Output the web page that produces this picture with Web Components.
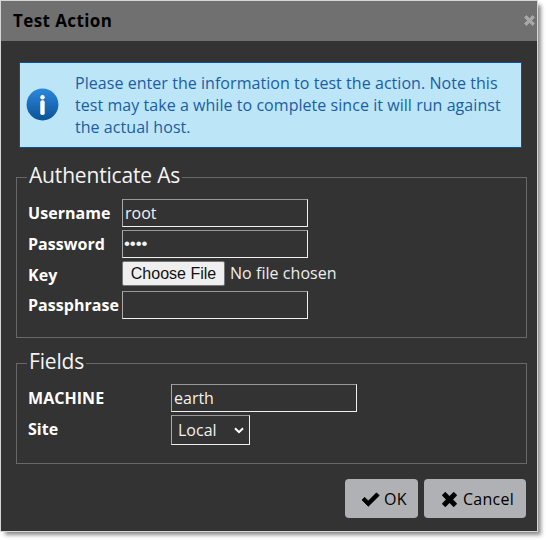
<!DOCTYPE html>
<html lang="en"><head><meta charset="utf-8"><title>Test Action</title>
<style>
html,body{margin:0;background:#fff}
body{width:546px;height:540px;overflow:hidden;font:16px/22px "Open Sans","Noto Sans",sans-serif}
</style></head><body>
<test-dialog heading="Test Action">
<info-note>Please enter the information to test the action. Note this test may take a while to complete since it will run against the actual host.</info-note>
<field-group legend="Authenticate As" class="auth">
<form-row label="Username" style="height:31px"><text-field value="root"></text-field></form-row>
<form-row label="Password" style="height:31px"><text-field value="••••" secret></text-field></form-row>
<form-row label="Key" style="height:30px"><file-field></file-field></form-row>
<form-row label="Passphrase" style="height:28px"><text-field value=""></text-field></form-row>
</field-group>
<field-group legend="Fields" class="extra">
<form-row label="MACHINE" style="height:31px"><text-field value="earth"></text-field></form-row>
<form-row label="Site" style="height:30px"><select-field value="Local"></select-field></form-row>
</field-group>
<action-button slot="actions" icon="check" style="width:73px;--pad:16px;--gap:4px">OK</action-button>
<action-button slot="actions" icon="cross" style="width:102px;--pad:18px;--gap:6px">Cancel</action-button>
</test-dialog>
<script>
const define=(name,render)=>customElements.define(name,class extends HTMLElement{
  connectedCallback(){
    if(this.shadowRoot)return;
    const t=document.createElement('template');
    t.innerHTML=render(this);
    this.attachShadow({mode:'open'}).append(t.content.cloneNode(true));
  }
});
const cross='<path d="M3.5 .8 8 5.2 12.5 .8 15.2 3.5 10.8 8 15.2 12.5 12.5 15.2 8 10.8 3.5 15.2 .8 12.5 5.2 8 .8 3.5Z" fill="currentColor" stroke="currentColor" stroke-width="1.4" stroke-linejoin="round"/>';
define('test-dialog',e=>`<style>
:host{display:flex;flex-direction:column;box-sizing:border-box;width:538px;height:532px;border:1px solid #d4d6d5;background:#333;box-shadow:4px 4px 4px -1px rgba(0,0,0,.45)}
header{height:40px;flex:none;box-sizing:border-box;background:#707070;color:#000;display:flex;align-items:center;justify-content:space-between;padding:0 2px 1px 12px;font-size:17px;font-weight:700;letter-spacing:.4px}
header svg{width:11px;height:11px;color:#a8a8a8}
main{padding:21px 10px 0 15px}
footer{display:flex;justify-content:flex-end;gap:6px;padding:15px 11px 0}
</style><header><span>${e.getAttribute('heading')}</span><svg viewBox="0 0 16 16">${cross}</svg></header><main><slot></slot></main><footer><slot name="actions"></slot></footer>`);
define('info-note',()=>`<style>
:host{display:flex;align-items:center;box-sizing:border-box;width:503px;height:86px;margin-left:3px;border:1px solid #0a52a0;background:#bce5f7;color:#1a5da6;padding:0 12px 0 6px;gap:16px;letter-spacing:.05px}
svg{width:33px;height:33px;flex:none;margin-top:-2px}p{margin:0 -8px 0 0;width:440px}
</style><svg viewBox="0 0 33 33"><defs><linearGradient id="g" x1="0" y1="0" x2="0" y2="1"><stop offset="0" stop-color="#2d87dc"/><stop offset="1" stop-color="#0a5397"/></linearGradient></defs><circle cx="16.5" cy="16.5" r="15.9" fill="url(#g)"/><circle cx="16.5" cy="9.2" r="2.2" fill="#fff"/><rect x="14.3" y="12.3" width="4.4" height="14.8" rx="1.8" fill="#fff"/></svg><p><slot></slot></p>`);
define('field-group',e=>`<style>
:host{display:block;width:511px}
:host(.auth){margin-top:17px;--label:94px;--top:9px;--h:138px}:host(.extra){margin-top:13px;--label:143px;--top:8px;--h:79px}
fieldset{box-sizing:border-box;margin:0;border:1px solid #686868;padding:var(--top) 0 0 11px;min-width:0}
legend{font-size:21px;line-height:25px;height:25px;padding:0 2px;color:#f4f4f4;margin-left:-1px;letter-spacing:-.17px}
legend span{position:relative;top:-2px}
div{height:var(--h)}
</style><fieldset><legend><span>${e.getAttribute('legend')}</span></legend><div><slot></slot></div></fieldset>`);
define('form-row',e=>`<style>
:host{display:flex;align-items:flex-start;color:#fff}
b{width:var(--label);flex:none;line-height:28px;white-space:nowrap;font-weight:700;letter-spacing:.05px}
</style><b>${e.getAttribute('label')}</b><slot></slot>`);
define('text-field',e=>`<style>
:host{box-sizing:border-box;display:block;width:186px;height:28px;border:1px solid #f0f0f0;border-top-color:#999;border-left-color:#aaa;padding:0 2px;line-height:27px;color:#f2f2f2}
:host([secret]){font:17px/26px "Liberation Sans",Arial,sans-serif;letter-spacing:-.1px;padding-left:1px}
</style><span>${e.getAttribute('value')}</span>`);
define('file-field',()=>`<style>
:host{display:flex;gap:5px;color:#eee;line-height:24px;letter-spacing:.05px}
button{box-sizing:border-box;width:103px;height:25px;margin:0;padding:0;border:1px solid #767676;border-radius:2px;background:#efefef;color:#111;font:16px/21px "Liberation Sans",Arial,sans-serif;white-space:nowrap}
</style><button>Choose File</button><span>No file chosen</span>`);
define('select-field',e=>`<style>
:host{box-sizing:border-box;display:flex;align-items:center;justify-content:space-between;width:79px;height:30px;border:1px solid #f0f0f0;border-top-color:#999;border-left-color:#aaa;padding:0 5px 0 6px;color:#f0f0f0}
svg{width:10px;height:7px}
</style><span>${e.getAttribute('value')}</span><svg viewBox="0 0 10 7"><path d="M1 1.2 5 5.2 9 1.2" fill="none" stroke="#fff" stroke-width="2"/></svg>`);
define('action-button',e=>{const ok=e.getAttribute('icon')==='check';return `<style>
:host{box-sizing:border-box;height:39px;display:flex;align-items:center;gap:var(--gap);padding-left:var(--pad);background:#b0b1b5;border-radius:4px;color:#000;letter-spacing:.25px}
svg{flex:none;width:${ok?19:15}px;height:15px;margin-top:2px}span{white-space:nowrap;margin-top:1px}
</style><svg viewBox="0 0 ${ok?19:16} ${ok?15:16}">${ok?'<path d="M1 8 3.6 5.3 7.3 9 15.5 .8 18.2 3.5 7.3 14.3Z" fill="currentColor" stroke="currentColor" stroke-width=".8" stroke-linejoin="round"/>':cross}</svg><span><slot></slot></span>`});
</script></body></html>
